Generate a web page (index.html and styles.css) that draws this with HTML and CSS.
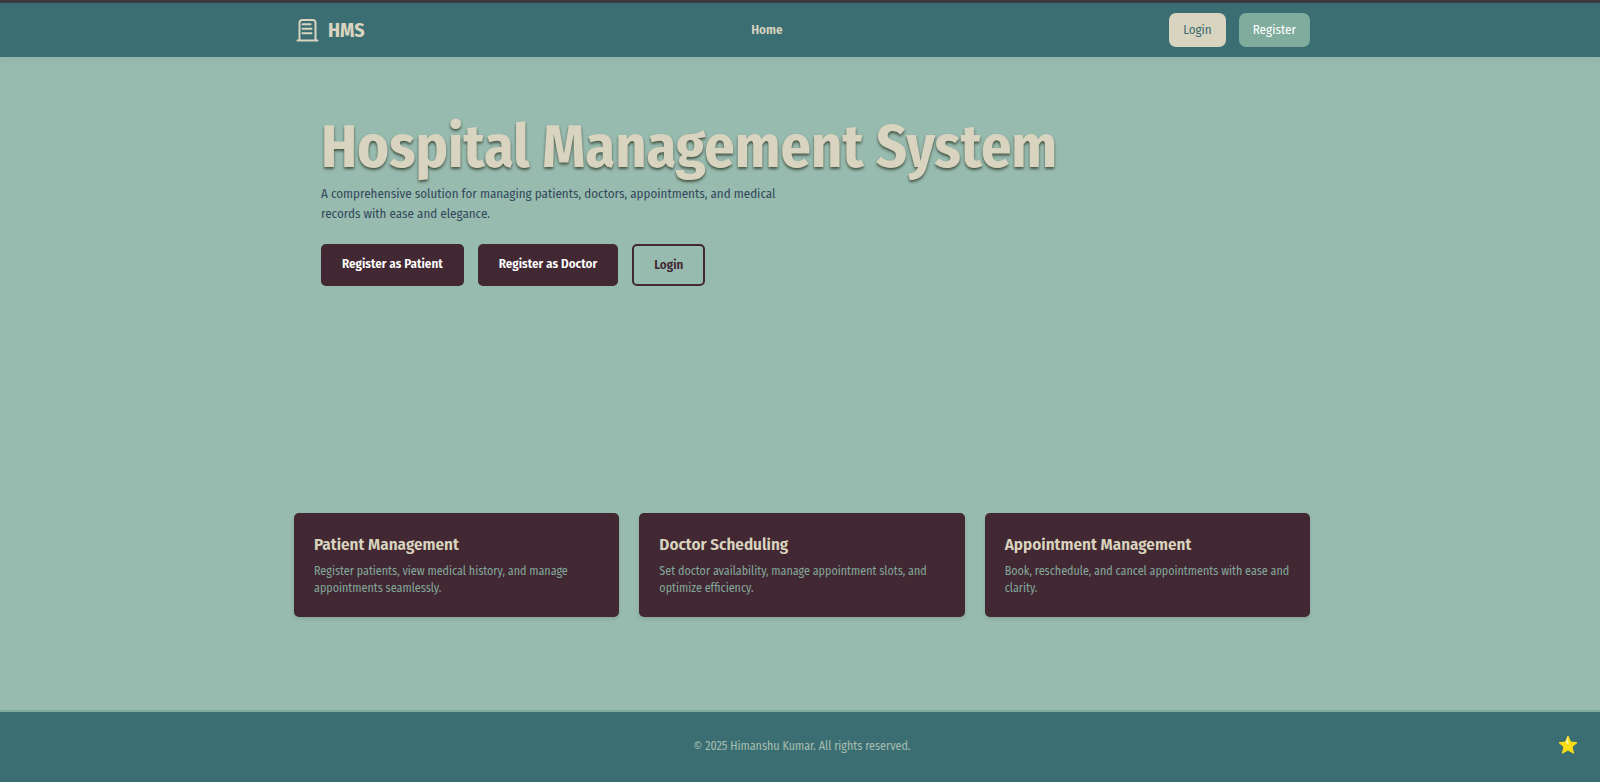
FILE: index.html
```html
<!DOCTYPE html>
<html lang="en">
<head>
<meta charset="utf-8">
<title>Hospital Management System</title>
<meta name="viewport" content="width=device-width, initial-scale=1">
<link rel="stylesheet" href="styles.css">
</head>
<body>
<header class="header">
  <div class="container header-row">
    <a class="brand" href="#">
      <svg class="brand-icon" viewBox="0 0 26 26" fill="none" stroke="currentColor" stroke-width="2" stroke-linecap="round" stroke-linejoin="round" aria-hidden="true">
        <path d="M3.500 23.500h20M5.500 23.500V5.500a2.500 2.500 0 0 1 2.500-2.500h11a2.500 2.500 0 0 1 2.500 2.500v18M8.500 7.200h8M8.500 11.700h9M8.500 16.300h9" />
      </svg>
      <span>HMS</span>
    </a>
    <nav><a class="nav-link" href="#">Home</a></nav>
    <div class="actions">
      <button class="action action-login" type="button">Login</button>
      <button class="action action-register" type="button">Register</button>
    </div>
  </div>
</header>
<main class="main">
  <section class="container hero">
    <h1 class="hero-title">Hospital Management System</h1>
    <p class="hero-text">A comprehensive solution for managing patients, doctors, appointments, and medical records with ease and elegance.</p>
    <div class="hero-buttons">
      <a class="cta" href="#">Register as Patient</a>
      <a class="cta" href="#">Register as Doctor</a>
      <a class="cta cta-outline" href="#">Login</a>
    </div>
  </section>
  <section class="container cards">
    <article class="card">
      <h2 class="card-title">Patient Management</h2>
      <p class="card-text">Register patients, view medical history, and manage appointments seamlessly.</p>
    </article>
    <article class="card">
      <h2 class="card-title">Doctor Scheduling</h2>
      <p class="card-text">Set doctor availability, manage appointment slots, and optimize efficiency.</p>
    </article>
    <article class="card">
      <h2 class="card-title">Appointment Management</h2>
      <p class="card-text">Book, reschedule, and cancel appointments with ease and clarity.</p>
    </article>
  </section>
</main>
<footer class="footer">
  <p class="copyright">© 2025 Himanshu Kumar. All rights reserved.</p>
</footer>
<button class="star" type="button" aria-label="Favourite">
  <svg viewBox="0 0 20 20" aria-hidden="true">
    <path d="M10 1l2.600 6 6.400.6-4.900 4.300 1.500 6.400L10 15l-5.600 3.300 1.500-6.400L1 7.600 7.400 7z" fill="#fbdc14" stroke="#fbdc14" stroke-linejoin="round"/>
    <path d="M10 1.500l.6 8.500L7.700 7.200z" fill="#fdf59a"/>
  </svg>
</button>
</body>
</html>
```
FILE: styles.css
```css
:root {
  --teal: #3b6e72;
  --mint: #98bbb0;
  --sage: #7fac9d;
  --sand: #d9d4bf;
  --plum: #422832;
}

* {
  box-sizing: border-box;
}

body {
  margin: 0;
  min-height: 100vh;
  display: flex;
  flex-direction: column;
  background: var(--mint);
  color: #34495a;
  font-family: "Fira Sans Condensed", "Liberation Sans Narrow", "Roboto Condensed", "Noto Sans", sans-serif;
  font-size: 13px;
  line-height: 20px;
}

h1, h2, p {
  margin: 0;
}

a {
  color: inherit;
  text-decoration: none;
}

button {
  font: inherit;
  border: 0;
  cursor: pointer;
}

.container {
  width: 100%;
  max-width: 1016px;
  margin: 0 auto;
}

.header,
.main,
.footer {
  padding-left: 4px;
}

.header {
  border-top: 3px solid #3c3a40;
  background: var(--teal);
  box-shadow: 0 3px 8px rgba(0, 0, 0, 0.04);
}

.header-row {
  display: flex;
  align-items: center;
  justify-content: space-between;
  padding: 10px 0;
}

.brand {
  display: flex;
  align-items: center;
  gap: 8px;
  color: var(--sand);
  font-size: 20px;
  font-weight: 700;
}

.brand-icon {
  width: 26px;
  height: 26px;
}

.nav-link {
  color: var(--sand);
  font-weight: 600;
}

.actions {
  display: flex;
  gap: 13px;
}

.action {
  height: 34px;
  padding: 0 14px;
  border-radius: 7px;
}

.action-login {
  background: var(--sand);
  color: var(--teal);
}

.action-register {
  background: var(--sage);
  color: #fff;
}

.main {
  flex: 1;
}

.hero {
  min-height: 456px;
  padding: 56px 27px 0;
}

.hero-title {
  margin-bottom: 3px;
  color: var(--sand);
  font-size: 60px;
  line-height: 68px;
  font-weight: 700;
  text-shadow: 0 2px 3px rgba(40, 50, 30, 0.75);
}

.hero-text {
  max-width: 480px;
}

.hero-buttons {
  display: flex;
  gap: 14px;
  margin-top: 20px;
}

.cta {
  padding: 10px 21px;
  border-radius: 5px;
  background: var(--plum);
  color: #fff;
  font-weight: 600;
}

.cta-outline {
  padding: 9px 20px;
  border: 2px solid var(--plum);
  background: transparent;
  color: var(--plum);
}

.cards {
  display: grid;
  grid-template-columns: repeat(auto-fit, minmax(280px, 1fr));
  gap: 20px;
  margin-bottom: 92px;
}

.card {
  padding: 20px;
  border-radius: 5px;
  background: var(--plum);
  box-shadow: 0 2px 4px rgba(0, 0, 0, 0.12);
}

.card-title {
  margin-bottom: 6px;
  color: var(--sand);
  font-size: 17px;
  font-weight: 600;
  line-height: 24px;
}

.card-text {
  color: #82a69c;
  font-size: 12px;
  line-height: 17px;
}

.footer {
  padding-top: 24px;
  padding-bottom: 26px;
  border-top: 2px solid var(--sage);
  background: var(--teal);
  text-align: center;
}

.copyright {
  color: #a5bdb0;
  font-size: 12px;
}

.star {
  position: fixed;
  right: 22px;
  bottom: 27px;
  width: 20px;
  height: 20px;
  padding: 0;
  background: none;
}

.star svg {
  display: block;
}
```
